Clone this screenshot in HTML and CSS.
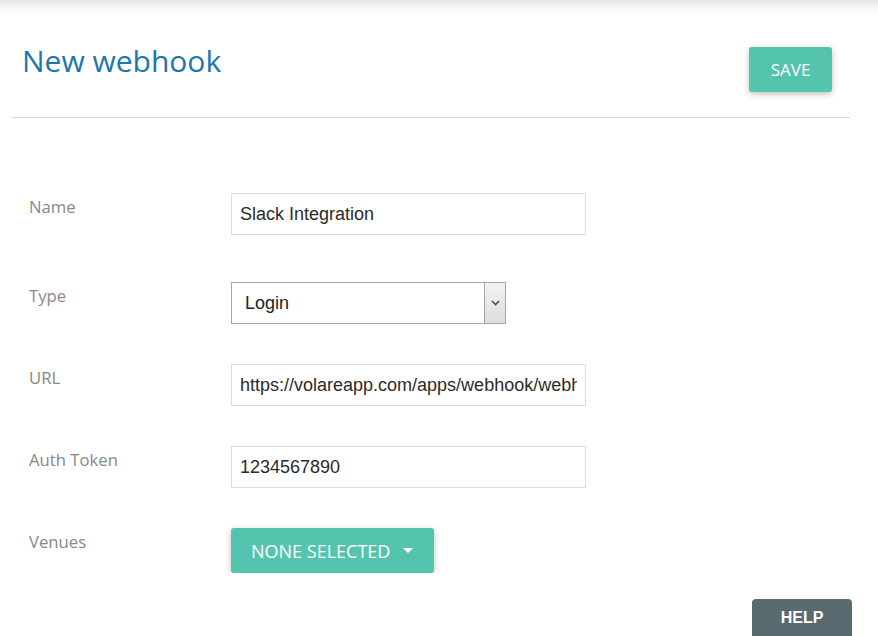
FILE: index.html
```html
<!DOCTYPE html>
<html>
<head>
  <title>New webhook</title>
  <link rel="stylesheet" href="styles.css">
</head>
<body>
  <div class="topbar-shadow"></div>

  <div class="page">
    <div class="page-header">
      <h1>New webhook</h1>
      <button class="btn btn-primary save-button">Save</button>
    </div>

    <form class="webhook-form">
      <div class="form-row">
        <label for="name">Name</label>
        <input type="text" id="name" value="Slack Integration">
      </div>

      <div class="form-row type-row">
        <label for="type">Type</label>
        <div class="select-box">
          <select id="type">
            <option>Login</option>
            <option>Logout</option>
            <option>Signup</option>
          </select>
          <span class="select-arrow">
            <svg width="9" height="6" viewBox="0 0 9 6"><path d="M1 1 L4.5 4.5 L8 1" fill="none" stroke="#4d4d4d" stroke-width="1.6"/></svg>
          </span>
        </div>
      </div>

      <div class="form-row">
        <label for="url">URL</label>
        <input type="text" id="url" value="https://volareapp.com/apps/webhook/webhook">
      </div>

      <div class="form-row">
        <label for="token">Auth Token</label>
        <input type="text" id="token" value="1234567890">
      </div>

      <div class="form-row">
        <label>Venues</label>
        <button type="button" class="btn btn-primary dropdown-button">
          None selected
          <span class="caret"></span>
        </button>
      </div>
    </form>
  </div>

  <button class="help-button">HELP</button>
</body>
</html>
```

FILE: styles.css
```css
body {
  margin: 0;
  font-family: "Open Sans", sans-serif;
  background-color: #FFFFFF;
  color: #333333;
}
.topbar-shadow {
  height: 14px;
  background: linear-gradient(to bottom, #E4E4E4, #F6F6F6 50%, #FFFFFF);
}
.page {
  width: 838px;
  padding-left: 12px;
}
.page-header {
  display: flex;
  justify-content: space-between;
  align-items: flex-start;
  padding: 26px 18px 25px 10px;
  border-bottom: 1px solid #DDDDDD;
}
h1 {
  font-size: 30px;
  font-weight: 400;
  margin: 0;
  color: #1A78AE;
  line-height: 41px;
}
.btn {
  font-family: "Open Sans", sans-serif;
  border: none;
  border-radius: 3px;
  cursor: pointer;
  text-transform: uppercase;
}
.btn-primary {
  background-color: #55C4AE;
  color: white;
  box-shadow: 0 2px 6px rgba(0, 0, 0, 0.25);
}
.btn-primary:hover {
  background-color: #4AB39E;
}
.save-button {
  margin-top: 7px;
  width: 83px;
  height: 45px;
  font-size: 17px;
}
.webhook-form {
  display: flex;
  flex-direction: column;
  gap: 40px;
  padding: 75px 0 0 17px;
}
.form-row {
  display: flex;
  align-items: flex-start;
}
.type-row {
  margin-top: 7px;
}
label {
  width: 202px;
  padding-top: 2px;
  font-size: 16.7px;
  color: #888888;
}
input {
  width: 355px;
  height: 42px;
  box-sizing: border-box;
  padding: 0 8px;
  border: 1px solid #DDDDDD;
  font-family: "Liberation Sans", Arial, sans-serif;
  font-size: 18px;
  color: #2B2B2B;
  outline: none;
}
.select-box {
  display: flex;
  width: 275px;
  height: 42px;
  box-sizing: border-box;
  border: 1px solid #A6A6A6;
}
.select-box select {
  flex: 1;
  appearance: none;
  border: none;
  background: white;
  padding: 0 13px;
  font-family: "Liberation Sans", Arial, sans-serif;
  font-size: 18px;
  color: #222222;
  outline: none;
}
.select-arrow {
  width: 20px;
  display: flex;
  align-items: center;
  justify-content: center;
  border-left: 1px solid #A6A6A6;
  background: linear-gradient(to bottom, #F2F2F2, #DDDDDD);
}
.dropdown-button {
  display: flex;
  align-items: center;
  height: 45px;
  padding: 0 21px 0 20px;
  font-size: 18px;
}
.caret {
  width: 0;
  height: 0;
  margin-left: 13px;
  border-left: 5px solid transparent;
  border-right: 5px solid transparent;
  border-top: 5px solid white;
}
.help-button {
  position: fixed;
  right: 26px;
  bottom: -8px;
  width: 100px;
  height: 45px;
  padding: 0 0 8px;
  border: none;
  border-radius: 4px 4px 0 0;
  background-color: #5A6A71;
  color: white;
  font-family: "Liberation Sans", Arial, sans-serif;
  font-weight: bold;
  font-size: 16px;
  cursor: pointer;
}
```
